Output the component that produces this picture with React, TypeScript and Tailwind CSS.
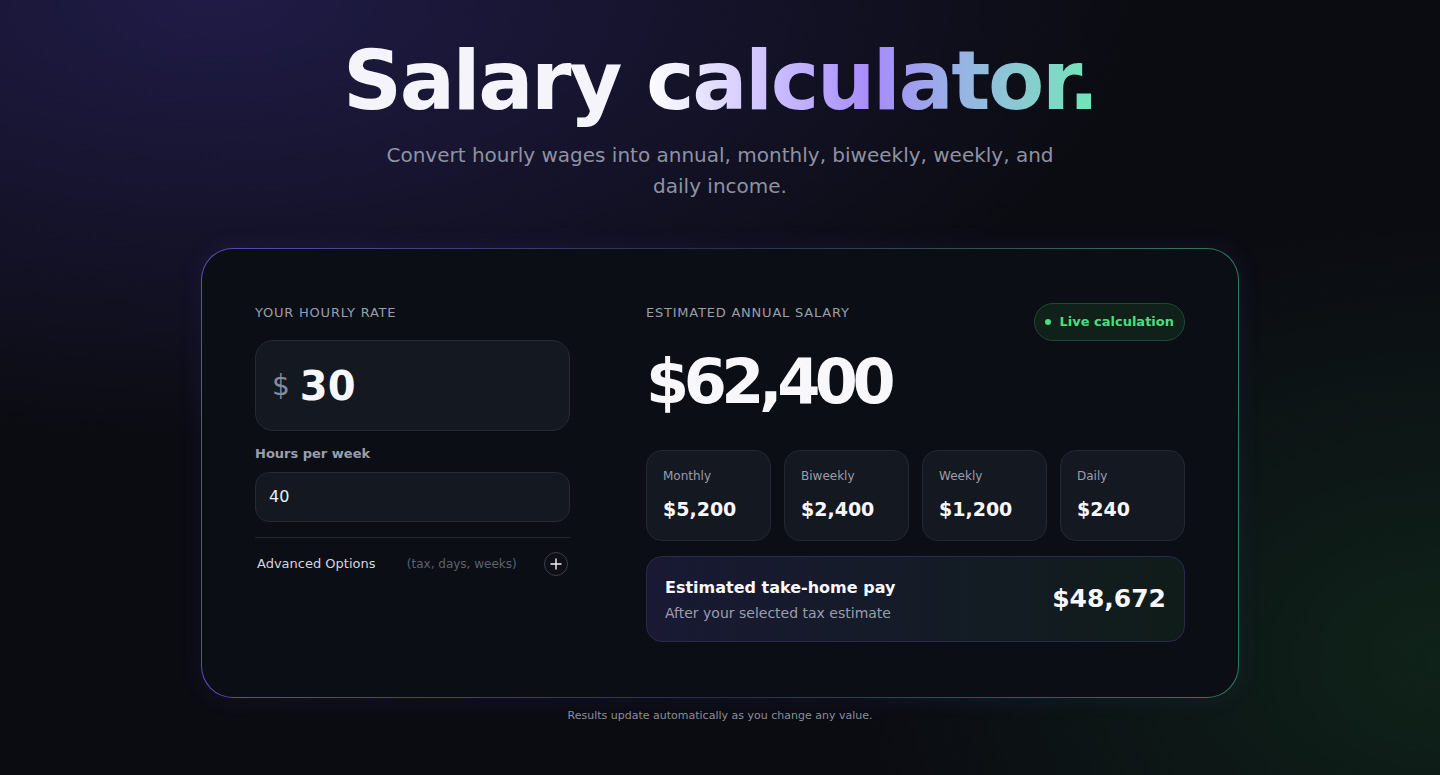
import { useState } from "react";

const fmt = (n: number) =>
  "$" + Math.round(n).toLocaleString("en-US");

export default function App() {
  const [rate] = useState(30);
  const [hours] = useState(40);

  const annual = rate * hours * 52;
  const breakdown = [
    { label: "Monthly", value: annual / 12 },
    { label: "Biweekly", value: annual / 26 },
    { label: "Weekly", value: annual / 52 },
    { label: "Daily", value: annual / 260 },
  ];
  const takeHome = 48672;

  return (
    <div className="min-h-screen w-full bg-[#0b0c12] bg-[image:radial-gradient(ellipse_85%_75%_at_15%_0%,rgba(38,32,88,0.75),transparent_75%),radial-gradient(ellipse_50%_70%_at_100%_85%,rgba(18,56,32,0.5),transparent_80%)] font-['DejaVu_Sans',sans-serif] text-white">
      <div className="flex flex-col items-center pt-[40px] pb-10">
        {/* Heading */}
        <h1 className="text-[82px] font-bold leading-none tracking-[-0.03em] text-[#f5f4fb]">
          Salary{" "}
          <span className="bg-gradient-to-r from-[#ffffff] via-[#a78bfa] to-[#6ee7b7] bg-clip-text text-transparent">
            calculator.
          </span>
        </h1>
        <p className="mt-[18px] max-w-[690px] text-center text-[20px] leading-[31px] text-[#8f92a3]">
          Convert hourly wages into annual, monthly, biweekly, weekly, and daily income.
        </p>

        {/* Card */}
        <div className="mt-[46px] w-[1038px] rounded-[32px] bg-gradient-to-r from-[#5b4bb8] via-[#2a2d4a] to-[#2f7a58] p-px shadow-[0_0_24px_rgba(90,70,200,0.12)]">
          <div className="grid grid-cols-[315px_1fr] gap-[76px] rounded-[31px] bg-[#0c0e15] px-[53px] pt-[54px] pb-[55px]">
            {/* Left column */}
            <div className="flex flex-col">
              <div className="text-[13px] leading-5 tracking-[0.06em] text-[#9a9eab]">YOUR HOURLY RATE</div>
              <div className="mt-[17px] flex h-[91px] items-center rounded-[18px] border border-[#252a35] bg-[#141820] pl-[16px]">
                <span className="text-[28px] text-[#868b98]">$</span>
                <span className="ml-[10px] text-[40px] font-bold text-[#f8f8fc]">{rate}</span>
              </div>

              <div className="mt-[13px] text-[13px] font-bold leading-5 text-[#9a9eab]">Hours per week</div>
              <div className="mt-[8px] flex h-[50px] items-center rounded-[14px] border border-[#252a35] bg-[#141820] pl-[13px] text-[16px] text-[#eef0f5]">
                {hours}
              </div>

              <div className="mt-[15px] border-t border-[#22262f]" />
              <div className="mt-[14px] flex items-center justify-between px-[2px]">
                <span className="text-[13px] text-[#d4d6de]">Advanced Options</span>
                <span className="ml-[4px] text-[12px] text-[#5c616d]">(tax, days, weeks)</span>
                <button className="flex h-[24px] w-[24px] items-center justify-center rounded-full border border-[#3a3f4b] bg-[#0e1016]">
                  <svg width="12" height="12" viewBox="0 0 12 12" fill="none" stroke="#f3f4f6" strokeWidth="1.4" strokeLinecap="round">
                    <path d="M6 1v10M1 6h10" />
                  </svg>
                </button>
              </div>
            </div>

            {/* Right column */}
            <div className="flex flex-col">
              <div className="flex items-start justify-between">
                <div className="text-[13px] leading-5 tracking-[0.06em] text-[#9a9eab]">ESTIMATED ANNUAL SALARY</div>
                <div className="flex h-[38px] items-center gap-[8px] rounded-full border border-[#1f4a31] bg-[#0f2119] px-[10px]">
                  <span className="h-[6px] w-[6px] rounded-full bg-[#4ade80]" />
                  <span className="text-[13px] font-bold text-[#4ade80]">Live calculation</span>
                </div>
              </div>

              <div className="mt-[10px] text-[62px] font-bold leading-none tracking-[-0.088em] text-[#f8f8fc]">
                {fmt(annual)}
              </div>

              <div className="mt-[37px] grid grid-cols-4 gap-[13px]">
                {breakdown.map((b) => (
                  <div key={b.label} className="h-[91px] rounded-[16px] border border-[#232833] bg-[#141820] px-[16px] pt-[15px]">
                    <div className="text-[12px] leading-5 text-[#9a9eab]">{b.label}</div>
                    <div className="mt-[11px] text-[19px] font-bold leading-6 text-[#f8f8fc]">{fmt(b.value)}</div>
                  </div>
                ))}
              </div>

              <div className="mt-[15px] flex h-[86px] items-center justify-between rounded-[16px] border border-[#2a2b4a] bg-gradient-to-r from-[#191934] to-[#101c19] px-[18px]">
                <div>
                  <div className="text-[16px] font-bold leading-6 text-[#f8f8fc]">Estimated take-home pay</div>
                  <div className="mt-[3px] text-[14px] leading-5 text-[#9a9eab]">After your selected tax estimate</div>
                </div>
                <div className="text-[25px] font-bold text-[#f8f8fc]">{fmt(takeHome)}</div>
              </div>
            </div>
          </div>
        </div>

        <p className="mt-[10px] text-[11px] text-[#8a8e9a]">Results update automatically as you change any value.</p>
      </div>
    </div>
  );
}
